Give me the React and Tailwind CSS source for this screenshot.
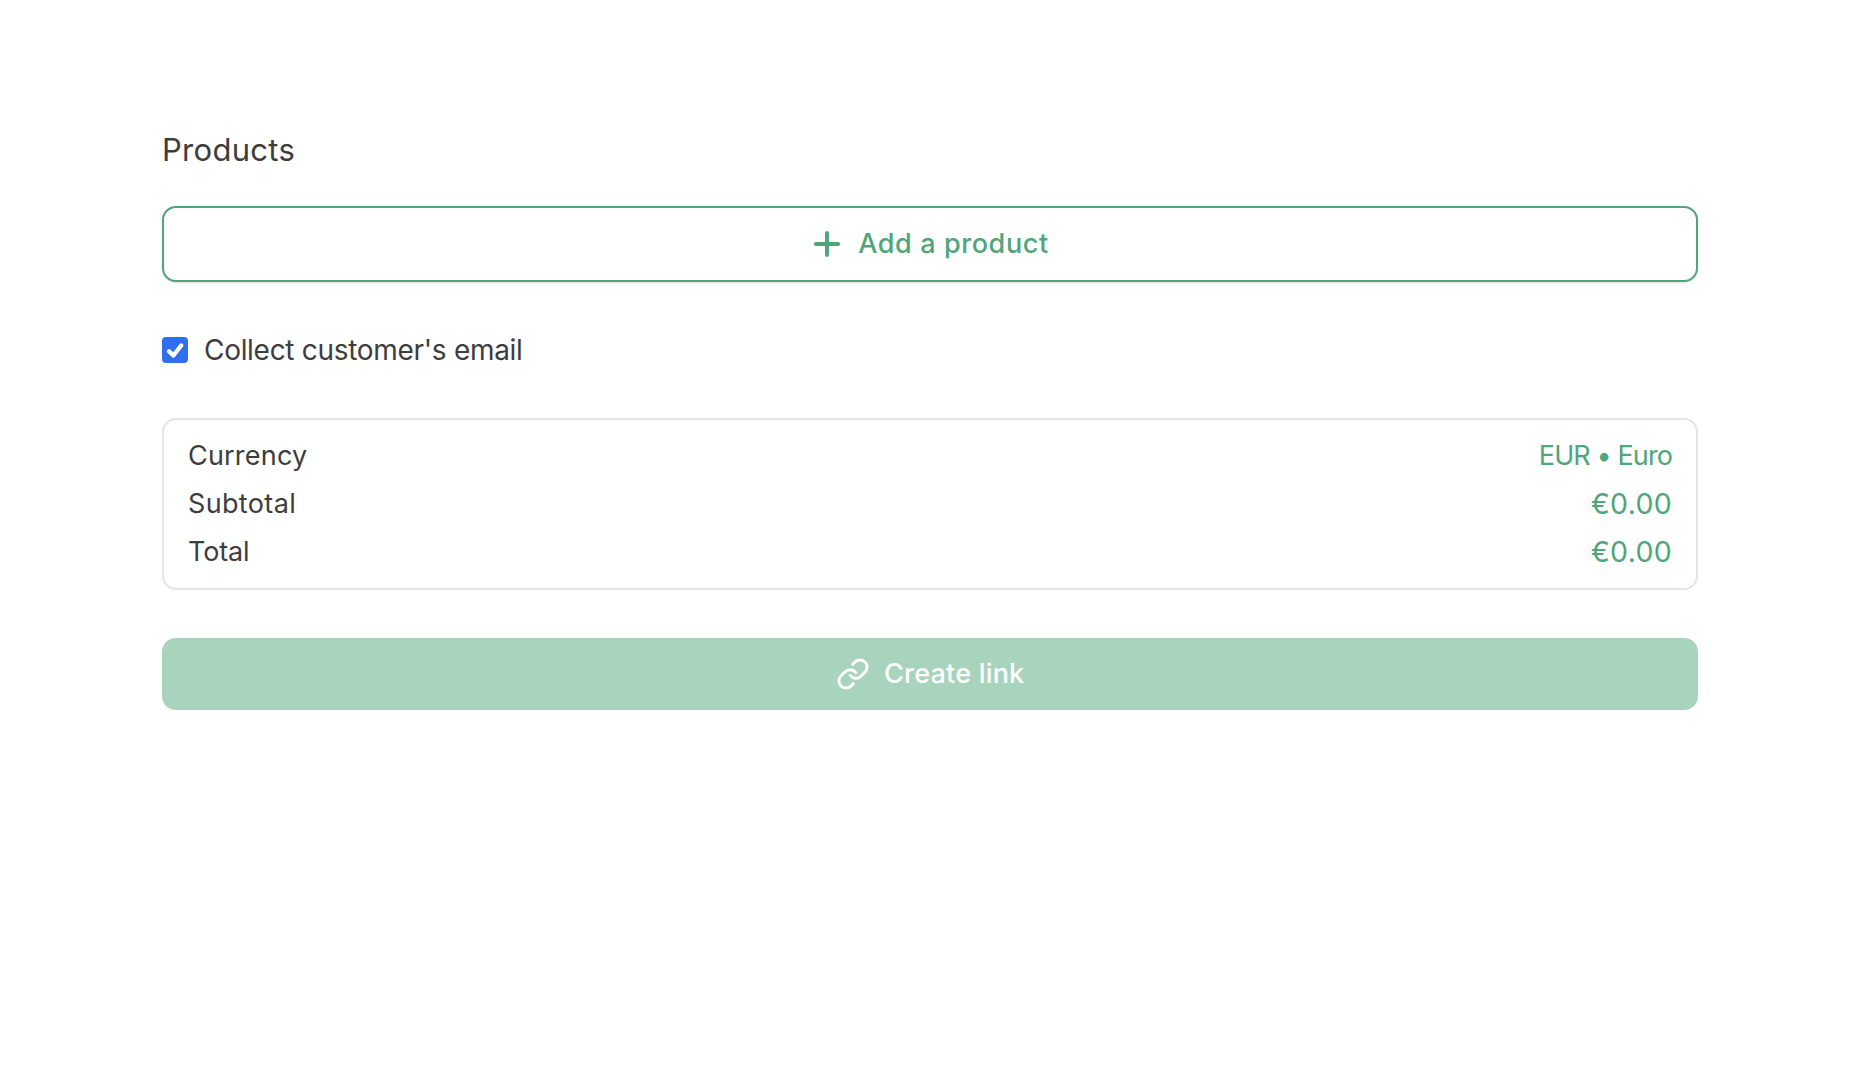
import React from "react";
import { Plus, Link } from "lucide-react";

export default function App() {
  return (
    <div className="min-h-[1066px] bg-white pl-[162px] pr-[158px] pt-[128px] text-[#3d3d3d] font-['Inter',sans-serif]">
      <h2 className="text-[31px] leading-[44px] tracking-[0.3px] font-normal">Products</h2>
      <button className="mt-[34px] flex h-[76px] w-full items-center justify-center gap-[12.5px] rounded-[14px] border-2 border-[#4fa67a] bg-white text-[#4fa67a] text-[27px] font-medium tracking-[0.6px] shadow-sm">
        <Plus size={38} strokeWidth={2.5} className="-ml-[3.5px]" />
        <span>Add a product</span>
      </button>
      <label className="mt-[54px] flex h-[28px] items-center gap-[16px] text-[28px] tracking-[-0.3px]">
        <span className="flex h-[26px] w-[26px] items-center justify-center rounded-[4px] bg-[#2f6fed]">
          <svg viewBox="0 0 16 16" className="h-[23px] w-[23px]" fill="none" stroke="#fff" strokeWidth="3" strokeLinecap="round" strokeLinejoin="round">
            <path d="M3.5 8.5 6.5 11.5 12 4.5" />
          </svg>
        </span>
        <span>Collect customer's email</span>
      </label>
      <div className="mt-[54px] flex h-[172px] flex-col justify-center rounded-[14px] border-2 border-[#e5e5e5] px-[24px] text-[27px]">
        <div className="flex h-[48px] items-center justify-between">
          <span className="tracking-[0.2px]">Currency</span>
          <span className="text-[#4fa67a] tracking-[-0.9px]">EUR • Euro</span>
        </div>
        <div className="flex h-[48px] items-center justify-between">
          <span className="tracking-[0.35px]">Subtotal</span>
          <span className="text-[#4fa67a] text-[28.5px] tracking-[0.3px]">€0.00</span>
        </div>
        <div className="flex h-[48px] items-center justify-between">
          <span className="tracking-[-0.15px]">Total</span>
          <span className="text-[#4fa67a] text-[28.5px] tracking-[0.3px]">€0.00</span>
        </div>
      </div>
      <button className="mt-[48px] flex h-[72px] w-full items-center justify-center gap-[14.5px] rounded-[14px] bg-[#a8d3bc] text-white text-[27px] font-medium tracking-[0.2px]">
        <Link size={34} strokeWidth={2.1} />
        <span>Create link</span>
      </button>
    </div>
  );
}
